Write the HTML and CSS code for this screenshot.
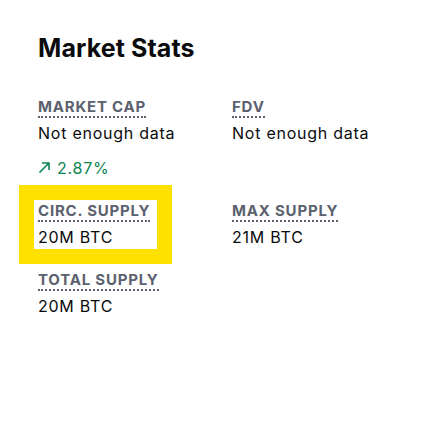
FILE: index.html
```html
<!DOCTYPE html>
<html>
<head>
<meta charset="utf-8">
<link rel="stylesheet" href="styles.css">
</head>
<body>
<section class="stats">
  <h2 class="title">Market Stats</h2>
  <div class="grid">
    <div class="cell">
      <div class="label"><span>MARKET CAP</span></div>
      <div class="value">Not enough data</div>
      <div class="change"><svg class="arrow" width="13" height="13" viewBox="0 0 13 13"><path d="M1.5 11.5 L11 2 M4 2 H11 V9" fill="none" stroke="#098551" stroke-width="1.6"/></svg>2.87%</div>
    </div>
    <div class="cell">
      <div class="label"><span>FDV</span></div>
      <div class="value">Not enough data</div>
    </div>
    <div class="cell highlight">
      <div class="label"><span>CIRC. SUPPLY</span></div>
      <div class="value">20M BTC</div>
    </div>
    <div class="cell">
      <div class="label"><span>MAX SUPPLY</span></div>
      <div class="value">21M BTC</div>
    </div>
    <div class="cell">
      <div class="label"><span>TOTAL SUPPLY</span></div>
      <div class="value">20M BTC</div>
    </div>
  </div>
</section>
</body>
</html>
```

FILE: styles.css
```css
html, body {
  margin: 0;
  padding: 0;
  background: #ffffff;
}
body {
  font-family: Inter, "Liberation Sans", sans-serif;
  color: #0a0b0d;
}
.stats {
  padding: 30px 38px;
}
.title {
  margin: 0 0 30px 0;
  font-size: 25px;
  line-height: 36px;
  font-weight: 700;
  letter-spacing: 0.1px;
}
.grid {
  display: grid;
  grid-template-columns: 194px 1fr;
  row-gap: 20px;
  justify-items: start;
}
.cell {
  display: flex;
  flex-direction: column;
  align-items: flex-start;
}
.label span {
  font-size: 15px;
  line-height: 20px;
  font-weight: 700;
  letter-spacing: 0.8px;
  color: #5b616e;
  border-bottom: 2px dotted #5b616e;
}
.value {
  margin-top: 4px;
  font-size: 16px;
  line-height: 24px;
  letter-spacing: 0.75px;
}
.change {
  margin-top: 11px;
  display: flex;
  align-items: center;
  gap: 6px;
  font-size: 16px;
  line-height: 24px;
  letter-spacing: 0.75px;
  color: #098551;
}
.arrow {
  display: block;
  margin-top: -1px;
}
.highlight {
  margin-left: -4px;
  padding: 0 7px 0 4px;
  background: #ffffff;
  outline: 15px solid #ffe100;
}
```
